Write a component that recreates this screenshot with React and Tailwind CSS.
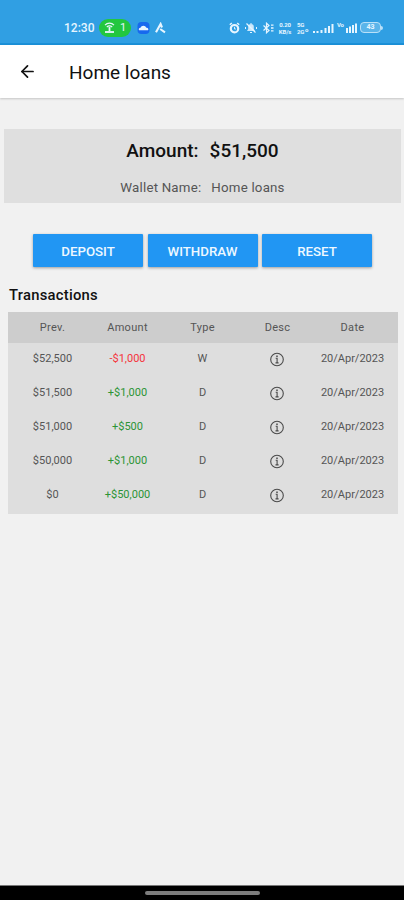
import { ArrowLeft } from 'lucide-react'

const transactions = [
  { id: 1, prev: '$52,500', amount: '-$1,000', type: 'W', date: '20/Apr/2023' },
  { id: 2, prev: '$51,500', amount: '+$1,000', type: 'D', date: '20/Apr/2023' },
  { id: 3, prev: '$51,000', amount: '+$500', type: 'D', date: '20/Apr/2023' },
  { id: 4, prev: '$50,000', amount: '+$1,000', type: 'D', date: '20/Apr/2023' },
  { id: 5, prev: '$0', amount: '+$50,000', type: 'D', date: '20/Apr/2023' },
]

function AlarmIcon() {
  return (
    <svg className="w-[11px] h-3" viewBox="0 0 11 12" fill="none" stroke="currentColor">
      <path d="M0.8 2.8 2.8 1M10.2 2.8 8.2 1" strokeWidth="1.5" />
      <circle cx="5.5" cy="6.7" r="3.7" strokeWidth="2.2" />
      <path d="M5.5 4.8v2.2h1.4" strokeWidth="0.9" />
    </svg>
  )
}

function BellOffIcon() {
  return (
    <svg className="w-3 h-3 ml-[5px]" viewBox="0 0 12 12" fill="none" stroke="currentColor">
      <path d="M2 9h8L8.8 7V4.8a2.8 2.8 0 0 0-5.6 0V7z" fill="currentColor" fillOpacity="0.85" stroke="none" />
      <path d="M5 10.5h2M6 1v1M0.5 5v2M11.5 5v2" />
      <path d="m1.5 1.5 9 9" strokeWidth="1.2" />
    </svg>
  )
}

function BluetoothIcon() {
  return (
    <svg className="w-3 h-3 ml-[5px]" viewBox="0 0 12 12" fill="none" stroke="currentColor" strokeWidth="1.2">
      <path d="m1.5 3.5 5.5 5-2.5 2.3V1.2L7 3.5 1.5 8.5" />
      <path d="M9 3.2h2.5M9 6h2.5M9 8.8h2.5" strokeWidth="1.3" />
    </svg>
  )
}

function SignalIcon() {
  return (
    <svg className="w-[21px] h-3 ml-[3px]" viewBox="0 0 21 12" fill="currentColor">
      <path d="M0 9h2v2H0zM3.5 9h2v2h-2zM7.5 8h2v3h-2zM11.5 6h2v5h-2zM15 4h2v7h-2zM18.5 2h2v9h-2z" />
    </svg>
  )
}

function InfoIcon() {
  return (
    <svg className="mx-auto h-[15px] w-[15px] text-[#4a4a4a]" viewBox="0 0 15 15" fill="none" stroke="currentColor">
      <circle cx="7" cy="7.5" r="6.3" strokeWidth="1.1" />
      <path d="M7 3.4v1.5" strokeWidth="1.5" />
      <path d="M5.7 6.3h1.4v4.4M5.5 10.9h3.1" strokeWidth="1.1" />
    </svg>
  )
}

function StatusBar() {
  return (
    <div className="flex h-[45px] shrink-0 items-center bg-[#309fe3] border-b-2 border-[#1b90d8] pt-3 pl-16 pr-[21px] text-[#e6f5ff]">
      <span className="w-8 text-[12px] leading-none font-medium">12:30</span>
      <span className="ml-[3px] flex h-[18px] w-8 items-center justify-center gap-[5px] rounded-full bg-[#22c73f] text-[11px] leading-none">
        <svg className="w-[11px] h-3" viewBox="0 0 11 12" fill="none" stroke="currentColor">
          <path d="M1 3.2a6 6 0 0 1 9 0M2.8 5.2a3.5 3.5 0 0 1 5.4 0" strokeWidth="1.2" />
          <path d="M5.5 5v4" strokeWidth="1.8" />
          <path d="M1 10h9" strokeWidth="1.8" />
        </svg>
        1
      </span>
      <svg className="w-[13px] h-3 ml-1.5" viewBox="0 0 13 12">
        <rect x="0.5" width="12" height="12" rx="4" fill="#1769ee" />
        <path d="M2 8.2a1.6 1.6 0 0 1 1.4-2.4 3.3 3.3 0 0 1 6 0A1.5 1.5 0 0 1 11 8.2z" fill="#e8f5ff" />
      </svg>
      <svg className="w-[11px] h-3 ml-[5px]" viewBox="0 0 11 12" fill="none" stroke="currentColor" strokeWidth="2.1">
        <path d="M1 10.3 5.6 2 7 5.5M5.2 7l4.8 3.3" />
      </svg>

      <div className="ml-auto flex items-center">
        <AlarmIcon />
        <BellOffIcon />
        <BluetoothIcon />
        <span className="ml-[3px] flex w-[16px] flex-col items-center text-[6px] leading-[7px] font-bold tracking-tight">
          <span>0.20</span>
          <span>KB/s</span>
        </span>
        <span className="ml-[4px] flex w-[13px] items-center text-[6px] leading-[7px] font-bold tracking-tighter">
          <span className="flex flex-col">
            <span>5G</span>
            <span>2G</span>
          </span>
          <span className="ml-px mt-1">o</span>
        </span>
        <SignalIcon />
        <span className="ml-[3px] flex w-5 items-center">
          <span className="-mt-1.5 w-[9px] text-[6px] leading-[7px] font-bold tracking-tighter">Vo</span>
          <svg className="w-[11px] h-3" viewBox="0 0 11 12" fill="currentColor">
            <path d="M0 6h2v5H0zM3 4.5h2V11H3zM6 3h2v8H6zM9 1.5h2V11H9z" />
          </svg>
        </span>
        <span className="ml-[3px] flex h-[11px] w-[21px] items-center justify-center rounded border border-[#b9e0f8] bg-[#5bb5ea] text-[7px] leading-none font-bold">
          43
        </span>
        <span className="h-1 w-[2px] rounded-r bg-[#b9e0f8]" />
      </div>
    </div>
  )
}

function ActionButton({ label }) {
  return (
    <button className="h-[33px] w-[110px] rounded-[1px] bg-[#2196f3] pt-[3px] text-[13.3px] leading-none text-[#eef8ff] font-medium shadow-[0_1px_3px_rgba(0,0,0,0.35)]">
      {label}
    </button>
  )
}

export default function App() {
  return (
    <div className="flex h-[900px] w-[404px] flex-col overflow-hidden bg-[#f1f1f1] font-[Roboto,sans-serif] text-[#111]">
      <StatusBar />

      {/* App bar */}
      <header className="flex h-[53px] shrink-0 items-center bg-white pl-[18px] shadow-[0_1px_2px_rgba(0,0,0,0.18)]">
        <ArrowLeft className="h-[19px] w-[19px]" strokeWidth={2.2} />
        <h1 className="ml-8 pt-px text-[19px] leading-none">Home loans</h1>
      </header>

      <main className="flex-1">
        {/* Wallet summary */}
        <section className="ml-1 mt-[31px] mr-[3px] flex h-[74px] flex-col items-center bg-[#dfdfdf]">
          <div className="mt-[11px] flex gap-[11px] text-[19px] leading-[22px] font-medium">
            <span>Amount:</span>
            <span>$51,500</span>
          </div>
          <div className="mt-[17px] flex gap-[10px] text-[13.3px] leading-[18px] tracking-[0.2px] text-[#555]">
            <span>Wallet Name:</span>
            <span>Home loans</span>
          </div>
        </section>

        <div className="mt-[31px] flex justify-center gap-[4.5px] pl-px">
          <ActionButton label="DEPOSIT" />
          <ActionButton label="WITHDRAW" />
          <ActionButton label="RESET" />
        </div>

        <h2 className="mt-[19px] ml-[9px] text-[14.8px] leading-[18px] font-medium tracking-[0.25px]">Transactions</h2>

        {/* Transactions table */}
        <section className="mt-2 ml-2 h-[202px] w-[390px] bg-[#dedede] text-center text-[11px] text-[#555]">
          <div className="grid h-[31px] grid-cols-5 items-center bg-[#cdcdcd] pl-[7px] pr-2 pt-px tracking-[0.3px]">
            <span>Prev.</span>
            <span>Amount</span>
            <span>Type</span>
            <span>Desc</span>
            <span>Date</span>
          </div>
          {transactions.map((t) => (
            <div key={t.id} className="grid h-[34px] grid-cols-5 items-center pb-0.5 pl-[7px] pr-2">
              <span>{t.prev}</span>
              <span className={t.amount.startsWith('-') ? 'text-[#f5333b]' : 'text-[#2c9435]'}>{t.amount}</span>
              <span>{t.type}</span>
              <InfoIcon />
              <span>{t.date}</span>
            </div>
          ))}
        </section>
      </main>

      {/* Gesture bar */}
      <div className="flex h-[15px] shrink-0 justify-center border-t border-[#777] bg-black pt-[5px]">
        <div className="h-[4px] w-[115px] rounded-full bg-[#7d7d7d]" />
      </div>
    </div>
  )
}
